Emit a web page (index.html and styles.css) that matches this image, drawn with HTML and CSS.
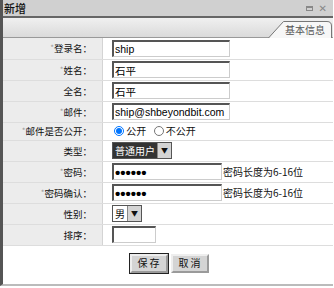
FILE: index.html
```html
<!DOCTYPE html>
<html lang="zh">
<head>
    <meta charset="UTF-8">
    <title>新增</title>
    <link rel="stylesheet" href="styles.css">
</head>
<body>
    <div class="window">
        <div class="titlebar">
            <span class="title">新增</span>
            <span class="tools"><span class="min"></span><span class="close">✕</span></span>
        </div>
        <div class="tabbar">
            <div class="tab">
                <svg class="tab-shape" width="64" height="18" viewBox="0 0 64 18">
                    <path d="M0.5 18 L15.5 1.5 H59 Q63.5 1.5 63.5 6 V18" fill="#f7f7f7" stroke="#777" stroke-width="1"/>
                </svg>
                <span class="tab-text">基本信息</span>
            </div>
        </div>
        <table class="form">
            <tr>
                <th><em>*</em>登录名：</th>
                <td><input type="text" class="txt" value="ship"></td>
            </tr>
            <tr>
                <th><em>*</em>姓名：</th>
                <td><input type="text" class="txt" value="石平"></td>
            </tr>
            <tr>
                <th>全名：</th>
                <td><input type="text" class="txt" value="石平"></td>
            </tr>
            <tr>
                <th><em>*</em>邮件：</th>
                <td><input type="text" class="txt" value="ship@shbeyondbit.com"></td>
            </tr>
            <tr class="short">
                <th><em>*</em>邮件是否公开：</th>
                <td class="radios">
                    <label><input type="radio" name="pub" checked> 公开</label>
                    <label><input type="radio" name="pub"> 不公开</label>
                </td>
            </tr>
            <tr>
                <th>类型：</th>
                <td><span class="sel"><span class="val on">普通用户</span><span class="arrow">▼</span></span></td>
            </tr>
            <tr>
                <th><em>*</em>密码：</th>
                <td><input type="password" class="pwd" value="123456"><span class="hint">密码长度为6-16位</span></td>
            </tr>
            <tr>
                <th><em>*</em>密码确认：</th>
                <td><input type="password" class="pwd" value="123456"><span class="hint">密码长度为6-16位</span></td>
            </tr>
            <tr>
                <th>性别：</th>
                <td><span class="sel"><span class="val">男</span><span class="arrow">▼</span></span></td>
            </tr>
            <tr>
                <th>排序：</th>
                <td><input type="text" class="num" value=""></td>
            </tr>
        </table>
        <div class="buttons">
            <button class="btn btn-main">保 存</button>
            <button class="btn">取 消</button>
        </div>
    </div>
</body>
</html>
```

FILE: styles.css
```css
body {
    margin: 0;
    background-color: #fff;
    font-family: "Noto Sans CJK SC", "DejaVu Sans", sans-serif;
    font-size: 10px;
    color: #111;
}
.window {
    width: 333px;
    height: 286px;
    border-left: 3px solid #555;
    border-bottom: 2px solid #bbb;
    box-sizing: border-box;
    background-color: #fff;
}
.titlebar {
    height: 16px;
    background-color: #d0d0d0;
    border-bottom: 2px solid #666;
    display: flex;
    justify-content: space-between;
    align-items: center;
    padding: 0 6px 0 1px;
}
.title {
    font-weight: 500;
    font-size: 11px;
    line-height: 16px;
}
.tools {
    display: flex;
    align-items: center;
    gap: 6px;
    color: #888;
}
.min {
    width: 7px;
    height: 5px;
    border: 1px solid #888;
    border-top-width: 2px;
    box-sizing: border-box;
}
.close {
    font-size: 10px;
    font-weight: bold;
    line-height: 10px;
}
.tabbar {
    height: 18px;
    padding-top: 1px;
    background: linear-gradient(#f0f0f0, #dadada);
    border-bottom: 1px solid #999;
    display: flex;
    justify-content: flex-end;
    align-items: flex-end;
    padding-right: 1px;
}
.tab {
    position: relative;
    width: 64px;
    height: 18px;
    margin-bottom: -1px;
}
.tab-shape {
    position: absolute;
    left: 0;
    top: 0;
}
.tab-text {
    position: relative;
    display: block;
    padding-left: 17px;
    font-size: 10px;
    line-height: 19px;
    white-space: nowrap;
    color: #555;
}
.form {
    width: 100%;
    border-collapse: collapse;
}
.form tr {
    height: 21px;
}
.form tr.short {
    height: 18px;
}
.form th {
    width: 89px;
    background-color: #ececec;
    font-weight: normal;
    font-size: 9.5px;
    text-align: right;
    padding: 0 10px 0 0;
    border-right: 1px solid #d4d4d4;
    border-bottom: 1px solid #ddd;
    line-height: 14px;
    white-space: nowrap;
}
.form td {
    padding: 0 0 0 9px;
    border-bottom: 1px solid #ddd;
    line-height: 14px;
    white-space: nowrap;
}
.form em {
    font-style: normal;
    color: #999;
    font-size: 8px;
    vertical-align: top;
}
input.txt, input.pwd, input.num {
    font-family: "Liberation Sans", "Noto Sans CJK SC", sans-serif;
    font-size: 10.5px;
    height: 17px;
    box-sizing: border-box;
    padding: 0 1px;
    border: 1px solid #ccc;
    border-top: 2px solid #555;
    border-left: 2px solid #555;
    margin: 0;
    vertical-align: middle;
}
input.txt {
    width: 118px;
}
input.pwd {
    width: 110px;
    font-family: "Liberation Sans", sans-serif;
    font-size: 15px;
    font-weight: bold;
}
input.num {
    width: 44px;
}
.hint {
    font-family: "Noto Sans CJK SC", sans-serif;
    font-size: 10px;
    margin-left: 1px;
    vertical-align: middle;
}
.radios label {
    margin-right: 3px;
}
.radios input {
    margin: 0 0 0 2px;
    width: 10px;
    height: 10px;
    vertical-align: -1px;
}
.sel {
    display: inline-flex;
    align-items: center;
    height: 17px;
    border: 1px solid #555;
    box-sizing: border-box;
    vertical-align: middle;
}
.val {
    padding: 0 2px;
    line-height: 15px;
    font-size: 10px;
}
.val.on {
    background-color: #333;
    color: #fff;
}
.arrow {
    width: 13px;
    height: 15px;
    background-color: #d4d4d4;
    border-left: 1px solid #888;
    font-size: 7px;
    text-align: center;
    line-height: 15px;
}
.buttons {
    display: flex;
    justify-content: center;
    gap: 3px;
    padding: 8px 0 0 2px;
}
.btn {
    font-family: "Noto Sans CJK SC", sans-serif;
    font-size: 10px;
    line-height: 14px;
    width: 38px;
    height: 19px;
    padding: 0;
    background-color: #d4d4d4;
    border: 2px outset #eee;
    color: #111;
}
.btn-main {
    outline: 1px solid #222;
}
```
